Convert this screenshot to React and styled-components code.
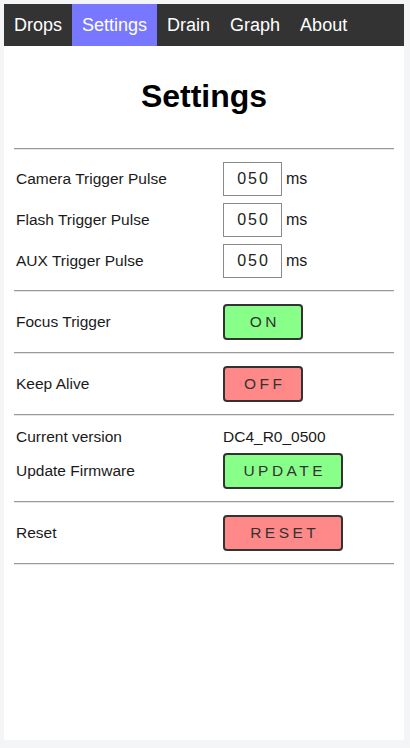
import React from "react";
import styled, { createGlobalStyle } from "styled-components";

const Global = createGlobalStyle`
  html, body { margin: 0; padding: 0; }
  body {
    background: #f4f5f7;
    padding: 4px;
    font-family: "Liberation Sans", Arial, sans-serif;
    color: #1a1a1a;
  }
`;

const Page = styled.div`
  width: 400px;
  min-height: 736px;
  background: #fff;
  display: flex;
  flex-direction: column;
`;

const Nav = styled.nav`
  display: flex;
  height: 42px;
  background: #333;
`;

const Tab = styled.a`
  display: flex;
  align-items: center;
  padding: 0 10px;
  font-size: 18px;
  color: #fff;
  text-decoration: none;
  background: ${(p) => (p.$active ? "#7777ff" : "transparent")};
`;

const Content = styled.main`
  padding: 0 10px;
  display: flex;
  flex-direction: column;
`;

const Title = styled.h1`
  margin: 32px 0 33px;
  font-size: 32px;
  font-weight: bold;
  text-align: center;
  color: #000;
`;

const Divider = styled.hr`
  margin: 0;
  height: 0;
  border: 0;
  border-top: 1px solid #9a9a9a;
  border-bottom: 1px solid #e6e6e6;
`;

const Section = styled.section`
  display: grid;
  grid-template-columns: 207px auto;
  row-gap: 7px;
  padding: 12px 0 12px 2px;
  align-items: center;
`;

const Label = styled.div`
  font-size: 15.5px;
  min-height: 18px;
  display: flex;
  align-items: center;
`;

const Value = styled.div`
  display: flex;
  align-items: center;
  gap: 4px;
  font-size: 15.5px;
`;

const NumInput = styled.input`
  box-sizing: border-box;
  width: 59px;
  height: 34px;
  border: 1px solid #8a8a8a;
  border-radius: 0;
  font-family: "Liberation Sans", Arial, sans-serif;
  font-size: 16px;
  letter-spacing: 2px;
  text-align: center;
  color: #222;
  padding: 0 0 0 2px;
  background: #fff;
`;

const Unit = styled.span`
  font-size: 16px;
`;

const Btn = styled.button`
  box-sizing: border-box;
  width: ${(p) => p.$w}px;
  height: 36px;
  border: 2px solid #333;
  border-radius: 4px;
  background: ${(p) => (p.$tone === "on" ? "#88ff88" : "#ff8888")};
  font-family: "Liberation Sans", Arial, sans-serif;
  font-size: 15.5px;
  font-weight: normal;
  letter-spacing: 3.5px;
  padding: 0 0 0 3.5px;
  color: #333;
`;

const tabs = ["Drops", "Settings", "Drain", "Graph", "About"];

const pulses = ["Camera Trigger Pulse", "Flash Trigger Pulse", "AUX Trigger Pulse"];

export default function App() {
  return (
    <>
      <Global />
      <Page>
        <Nav>
          {tabs.map((t) => (
            <Tab key={t} $active={t === "Settings"}>
              {t}
            </Tab>
          ))}
        </Nav>
        <Content>
          <Title>Settings</Title>
          <Divider />
          <Section>
            {pulses.map((p) => (
              <React.Fragment key={p}>
                <Label>{p}</Label>
                <Value>
                  <NumInput defaultValue="050" />
                  <Unit>ms</Unit>
                </Value>
              </React.Fragment>
            ))}
          </Section>
          <Divider />
          <Section>
            <Label>Focus Trigger</Label>
            <Value>
              <Btn $w={80} $tone="on">ON</Btn>
            </Value>
          </Section>
          <Divider />
          <Section>
            <Label>Keep Alive</Label>
            <Value>
              <Btn $w={80} $tone="off">OFF</Btn>
            </Value>
          </Section>
          <Divider />
          <Section>
            <Label>Current version</Label>
            <Value>DC4_R0_0500</Value>
            <Label>Update Firmware</Label>
            <Value>
              <Btn $w={120} $tone="on">UPDATE</Btn>
            </Value>
          </Section>
          <Divider />
          <Section>
            <Label>Reset</Label>
            <Value>
              <Btn $w={120} $tone="off">RESET</Btn>
            </Value>
          </Section>
          <Divider />
        </Content>
      </Page>
    </>
  );
}
